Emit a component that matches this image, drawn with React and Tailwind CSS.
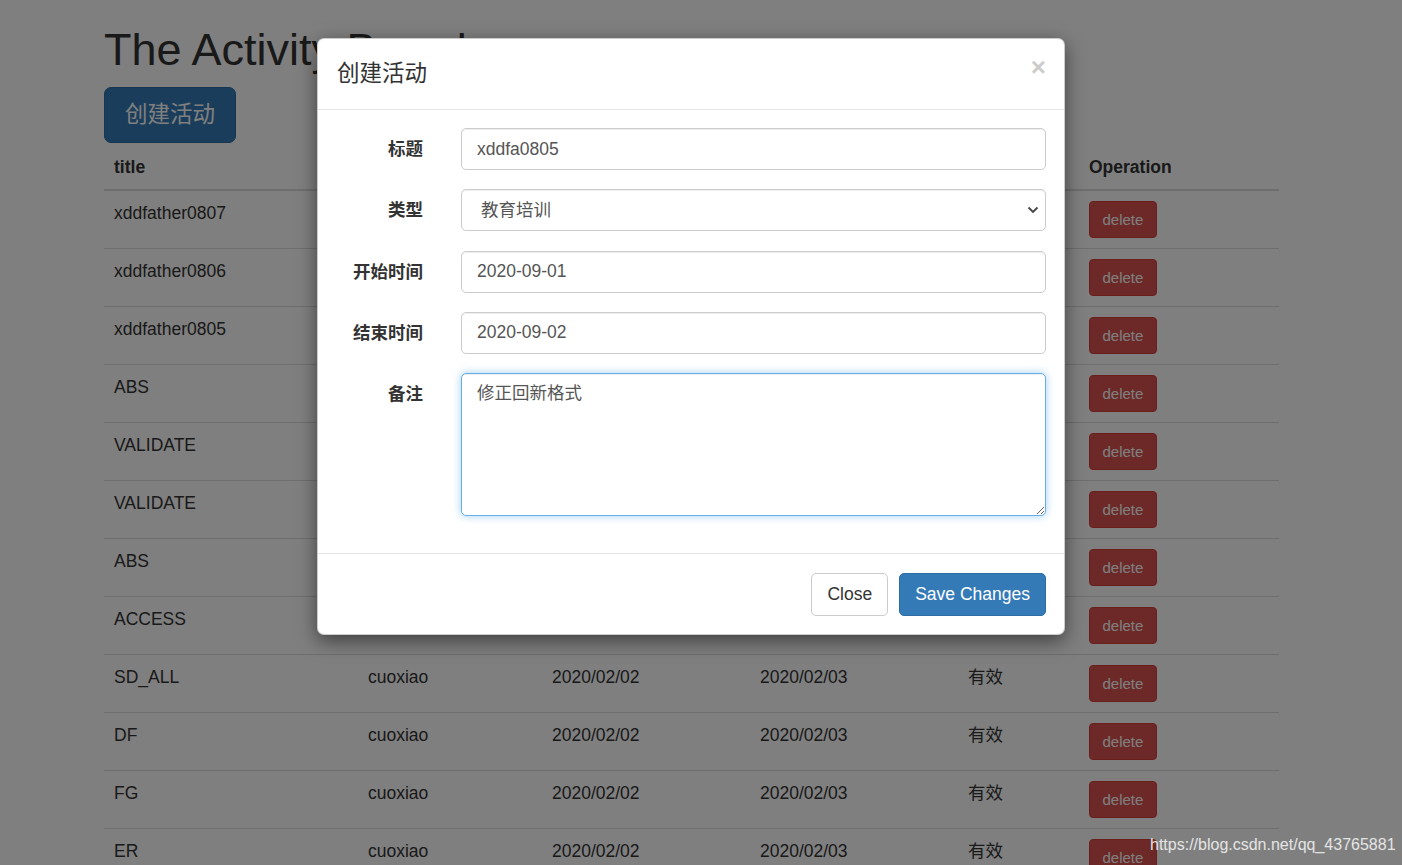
import React from 'react';

const rows = [
  'xddfather0807',
  'xddfather0806',
  'xddfather0805',
  'ABS',
  'VALIDATE',
  'VALIDATE',
  'ABS',
  'ACCESS',
  'SD_ALL',
  'DF',
  'FG',
  'ER',
];

const inputClass =
  'w-full h-[42px] px-[15px] text-[17.5px] text-[#555] bg-white border border-[#ccc] rounded-[5px] shadow-[inset_0_1px_1px_rgba(0,0,0,0.075)] outline-none';

const FormRow = ({ label, children }) => (
  <div className="flex mb-[19.3px]">
    <label className="w-[86px] shrink-0 text-right font-bold text-[17.5px] leading-[25px] pt-[9px] text-[#333]">
      {label}
    </label>
    <div className="ml-[38px] flex-1">{children}</div>
  </div>
);

export default function App() {
  return (
    <div className="relative h-[865px] overflow-hidden bg-white text-[#333] text-[17.5px] leading-[25px] font-['Liberation_Sans','Noto_Sans_CJK_SC',sans-serif]">
      {/* Page */}
      <div className="pl-[104px] w-[1279px]">
        <h1 className="mt-[25px] mb-[12px] text-[45px] leading-[50px] font-medium">The Activity Board</h1>
        <button className="h-[56px] px-[20px] text-[22.5px] leading-[30px] text-white bg-[#337ab7] border border-[#2e6da4] rounded-[7px]">
          创建活动
        </button>
        <table className="mt-[1px] w-[1175px] border-collapse table-fixed">
          <colgroup>
            <col className="w-[254px]" />
            <col className="w-[184px]" />
            <col className="w-[208px]" />
            <col className="w-[208px]" />
            <col className="w-[121px]" />
            <col className="w-[200px]" />
          </colgroup>
          <thead>
            <tr>
              {['title', 'type', 'startTime', 'endTime', 'status', 'Operation'].map((h) => (
                <th key={h} className="text-left font-bold px-[10px] pt-[11px] pb-[9px] border-b-2 border-[#ddd]">
                  {h}
                </th>
              ))}
            </tr>
          </thead>
          <tbody>
            {rows.map((r, i) => (
              <tr key={i} className="border-t border-[#ddd] align-top">
                <td className="p-[10px]">{r}</td>
                <td className="p-[10px]">cuoxiao</td>
                <td className="p-[10px]">2020/02/02</td>
                <td className="p-[10px]">2020/02/03</td>
                <td className="p-[10px]">有效</td>
                <td className="p-[10px]">
                  <button className="h-[37px] px-[12.5px] text-[15px] leading-[22px] text-white bg-[#d9534f] border border-[#d43f3a] rounded-[4px]">
                    delete
                  </button>
                </td>
              </tr>
            ))}
          </tbody>
        </table>
      </div>

      {/* Backdrop */}
      <div className="absolute inset-0 bg-black/50"></div>

      {/* Modal */}
      <div className="absolute left-[317px] top-[38px] w-[748px] bg-white border border-black/20 rounded-[7px] shadow-[0_6px_19px_rgba(0,0,0,0.5)]">
        <div className="flex justify-between items-start px-[19px] pt-[19px] pb-[19px] border-b border-[#e5e5e5] h-[71px]">
          <h4 className="text-[22.5px] leading-[32px] font-normal">创建活动</h4>
          <span className="text-[26px] leading-[26px] font-bold text-black opacity-20 -mt-[4px] -mr-[1px]">×</span>
        </div>
        <div className="pt-[18px] pb-[18px] pl-[19px] pr-[18px]">
          <FormRow label="标题">
            <input className={inputClass} defaultValue="xddfa0805" />
          </FormRow>
          <FormRow label="类型">
            <div className="relative">
              <select className={inputClass + ' appearance-none pl-[19px]'} defaultValue="教育培训">
                <option>教育培训</option>
                <option>文化娱乐</option>
                <option>体育运动</option>
              </select>
              <svg
                className="absolute right-[7px] top-[17px] pointer-events-none"
                width="12"
                height="8"
                viewBox="0 0 12 8"
                fill="none"
                stroke="#444"
                strokeWidth="1.8"
              >
                <path d="M1.5 1.5 L6 6 L10.5 1.5" />
              </svg>
            </div>
          </FormRow>
          <FormRow label="开始时间">
            <input className={inputClass} defaultValue="2020-09-01" />
          </FormRow>
          <FormRow label="结束时间">
            <input className={inputClass} defaultValue="2020-09-02" />
          </FormRow>
          <FormRow label="备注">
            <textarea
              rows={5}
              className="block w-full h-[143px] px-[15px] py-[7px] text-[17.5px] leading-[25px] text-[#555] bg-white border border-[#66afe9] rounded-[5px] outline-none shadow-[inset_0_1px_1px_rgba(0,0,0,0.075),0_0_8px_rgba(102,175,233,0.6)]"
              defaultValue="修正回新格式"
            />
          </FormRow>
        </div>
        <div className="flex justify-end gap-[11px] pl-[19px] pr-[18px] pt-[19px] pb-[18px] border-t border-[#e5e5e5]">
          <button className="h-[43px] px-[15px] text-[17.5px] text-[#333] bg-white border border-[#ccc] rounded-[5px]">
            Close
          </button>
          <button className="h-[43px] px-[15px] text-[17.5px] text-white bg-[#337ab7] border border-[#2e6da4] rounded-[5px]">
            Save Changes
          </button>
        </div>
      </div>

      {/* Watermark */}
      <div className="absolute left-[1150px] top-[834px] text-[16px] leading-[22px] text-[#e4e4e4] font-['Liberation_Sans',sans-serif]">
        https://blog.csdn.net/qq_43765881
      </div>
    </div>
  );
}
